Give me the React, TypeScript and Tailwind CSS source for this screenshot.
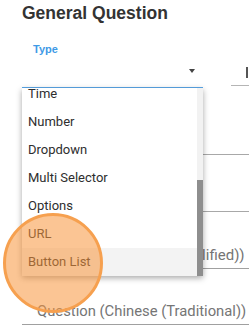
import React from "react";

const items = ["Time", "Number", "Dropdown", "Multi Selector", "Options", "URL", "Button List"];

export default function App() {
  return (
    <div
      className="relative w-[249px] h-[333px] overflow-hidden bg-white"
      style={{ fontFamily: "Roboto, 'Liberation Sans', sans-serif" }}
    >
      <div className="pl-[22px]">
        <h1
          className="pt-[3px] h-[23px] leading-[20px] text-[17.5px] font-bold text-[#333333]"
          style={{ fontFamily: "'Liberation Sans', Arial, sans-serif" }}
        >
          General Question
        </h1>
        <div className="mt-[20px] flex">
          <div className="w-[181px] border-b border-[#5ba8ea]">
            <div
              className="h-[12px] leading-[12px] pl-[11px] text-[11px] font-bold text-[#3f9ae6]"
              style={{ fontFamily: "'Liberation Sans', Arial, sans-serif" }}
            >
              Type
            </div>
            <div className="h-[32px] flex justify-end pr-[8px] pt-[14px]">
              <svg width="6" height="4" viewBox="0 0 6 4">
                <path d="M0 0 L6 0 L3 4 Z" fill="#444" />
              </svg>
            </div>
          </div>
          <div className="ml-[28px] flex-1 h-[43px] border-b border-[#b5b5b5]">
            <span className="block w-[2px] h-[11px] bg-[#555] ml-[15px] mt-[24px]" />
          </div>
        </div>
        <div className="h-[67px] border-b border-[#a8a8a8]" />
        <div className="h-[57px] border-b border-[#a8a8a8]" />
        <div className="h-[57px] border-b border-[#a0a0a0] flex items-end pl-[15px] pb-[3px] text-[15px] leading-[20px] text-[#757575] whitespace-nowrap">
          Question (Chinese (Simplified))
        </div>
        <div className="h-[56px] border-b border-[#a0a0a0] flex items-end pl-[15px] pb-[3px] text-[14.8px] leading-[20px] text-[#757575] whitespace-nowrap">
          Question (Chinese (Traditional))
        </div>
      </div>

      <div className="absolute left-[22px] top-[88px] w-[181px] h-[188px] bg-white overflow-hidden flex shadow-[0_2px_6px_rgba(0,0,0,0.35)]">
        <div className="flex-1 -mt-[8px]">
          {items.map((it, i) => (
            <div
              key={it}
              className={
                "h-[28px] flex items-center pl-[6px] text-[13px] text-[#2e2e2e] " +
                (i === items.length - 1 ? "bg-[#f3f3f3]" : "")
              }
            >
              {it}
            </div>
          ))}
        </div>
        <div className="w-[6px] flex flex-col bg-[#f2f2f2]">
          <div className="flex-1" />
          <div className="h-[96px] bg-[#8e8e8e]" />
        </div>
      </div>

      <div className="absolute left-[3px] top-[213px] w-[100px] h-[100px] rounded-full border-[3px] border-[#f6a04f] bg-[rgba(248,150,60,0.55)]" />
    </div>
  );
}
